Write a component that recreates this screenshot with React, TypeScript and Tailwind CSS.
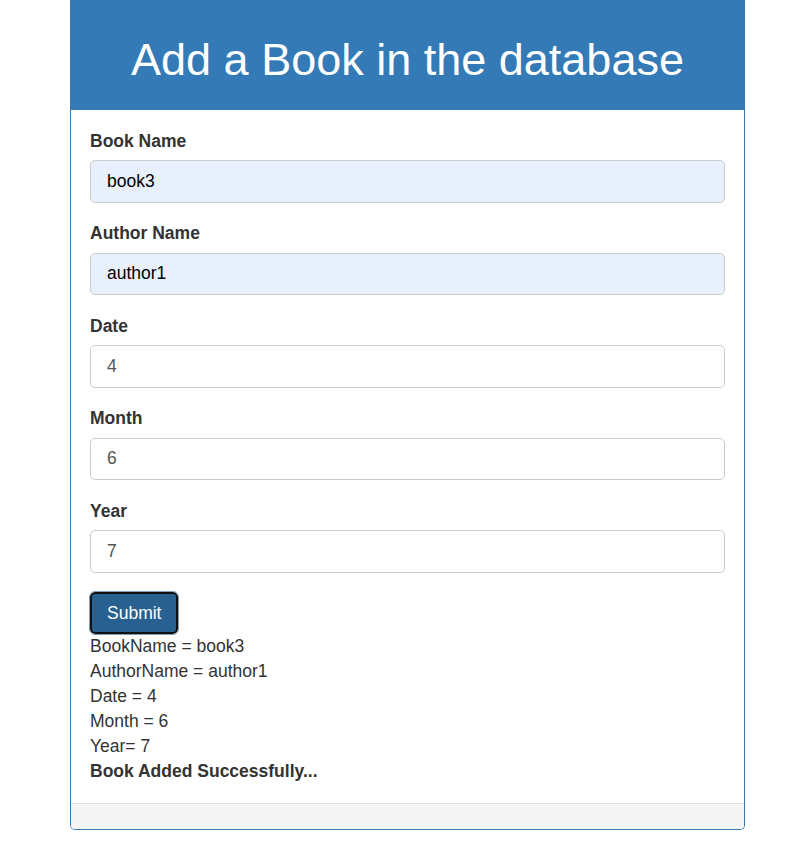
import React from "react";

const fields = [
    { label: "Book Name", value: "book3", filled: true },
    { label: "Author Name", value: "author1", filled: true },
    { label: "Date", value: "4", filled: false },
    { label: "Month", value: "6", filled: false },
    { label: "Year", value: "7", filled: false },
];

const results = [
    "BookName = book3",
    "AuthorName = author1",
    "Date = 4",
    "Month = 6",
    "Year= 7",
];

const App = () => {
    return (
        <div
            className="min-h-[850px] bg-white text-[#333] text-[17.5px]"
            style={{ fontFamily: '"Liberation Sans", Arial, sans-serif' }}
        >
            <div className="ml-[70px] w-[675px] border border-t-0 border-[#337ab7] rounded-b-[5px] overflow-hidden">
                <div className="h-[110px] bg-[#337ab7] flex items-center justify-center">
                    <h1 className="text-white text-[45px] leading-none pt-[8px]">
                        Add a Book in the database
                    </h1>
                </div>
                <div className="px-[19px] pt-[18.75px] pb-[18.75px]">
                    {fields.map((f, i) => (
                        <div key={i} className="mb-[18.75px]">
                            <label className="block font-bold leading-[25px] mb-[6.25px]">
                                {f.label}
                            </label>
                            <input
                                readOnly
                                value={f.value}
                                className={
                                    f.filled
                                        ? "block w-full h-[42.5px] px-[16px] text-[17.5px] rounded-[5px] border border-[#ccc] bg-[#e8f0fe] text-black outline-none"
                                        : "block w-full h-[42.5px] px-[16px] text-[17.5px] rounded-[5px] border border-[#ccc] bg-white text-[#555] outline-none"
                                }
                            />
                        </div>
                    ))}
                    <button className="mt-[1px] h-[42px] px-[15px] text-[17.5px] text-white bg-[#286090] rounded-[5px] border-2 border-[#111] outline outline-1 outline-[#7f9fbf]">
                        Submit
                    </button>
                    <div className="leading-[25px]">
                        {results.map((r, i) => (
                            <div key={i}>{r}</div>
                        ))}
                        <div className="font-bold">Book Added Successfully...</div>
                    </div>
                </div>
                <div className="h-[26px] bg-[#f5f5f5] border-t border-[#ddd]" />
            </div>
        </div>
    );
};

export default App;
